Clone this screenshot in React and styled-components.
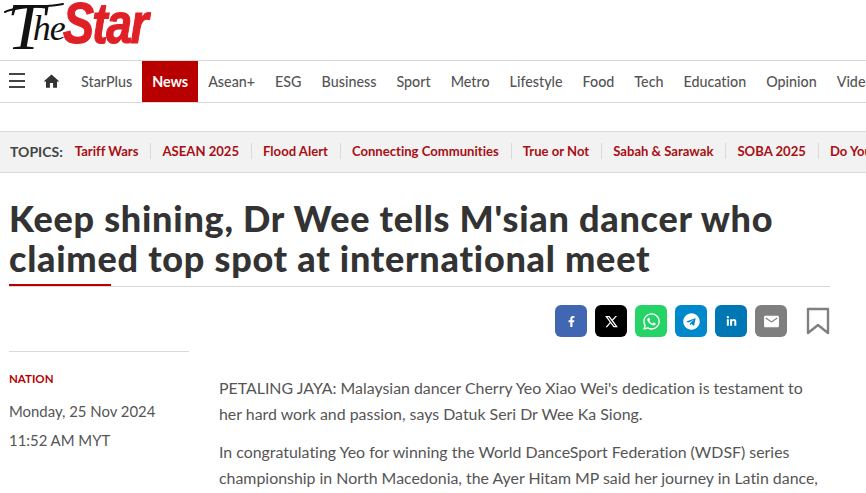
import React from 'react'
import styled, { createGlobalStyle } from 'styled-components'
import { FaFacebookF, FaWhatsapp, FaTelegram, FaLinkedinIn } from 'react-icons/fa'
import { RiTwitterXLine } from 'react-icons/ri'
import { IoMdMail } from 'react-icons/io'
import { MdHome } from 'react-icons/md'

const GlobalStyle = createGlobalStyle`
  html, body {
    margin: 0;
    padding: 0;
    width: 866px;
    height: 493px;
    overflow: hidden;
    background: #fff;
    font-family: Lato, "Liberation Sans", sans-serif;
    font-variant-ligatures: none;
    color: #333;
  }
  * { box-sizing: border-box; }
`
const Page = styled.div`
  width: 866px;
  height: 493px;
  overflow: hidden;
`
const LogoBar = styled.header`
  height: 61px;
  padding-left: 7px;
  display: flex;
  align-items: flex-start;
  border-bottom: 1px solid #d9d9d9;
  position: relative;
`
const LogoThe = styled.span`
  display: flex;
  align-items: flex-start;
  font-family: "Liberation Serif", serif;
  font-style: italic;
  color: #111;
  margin-right: -2px;
`
const LogoCap = styled.span`
  font-size: 68px;
  line-height: 80px;
  margin-top: -14px;
  margin-right: -12px;
`
const LogoRest = styled.span`
  font-size: 36px;
  line-height: 44px;
  margin-top: 6px;
  letter-spacing: -1px;
`
const LogoSwash = styled.svg`
  position: absolute;
  left: 0;
  top: 0;
  width: 70px;
  height: 20px;
`
const LogoStar = styled.span`
  font-family: "Liberation Sans", sans-serif;
  font-style: italic;
  font-weight: 700;
  font-size: 58px;
  line-height: 70px;
  letter-spacing: -2px;
  color: #e02027;
  -webkit-text-stroke: 1.2px #e02027;
  margin-top: -12px;
  display: inline-block;
  transform: scaleX(0.8);
  transform-origin: left center;
`
const Nav = styled.nav`
  height: 42px;
  display: flex;
  align-items: stretch;
  border-bottom: 1px solid #d9d9d9;
  white-space: nowrap;
  overflow: hidden;
`
const Burger = styled.button`
  flex: none;
  width: 16px;
  height: 15px;
  margin: 12px 0 0 9px;
  padding: 0;
  border: 0;
  background: none;
  border-top: 2px solid #444;
  border-bottom: 2px solid #444;
  position: relative;
  &::after {
    content: '';
    position: absolute;
    left: 0;
    right: 0;
    top: 4.5px;
    height: 2px;
    background: #444;
  }
`
const Home = styled.span`
  flex: none;
  display: flex;
  align-items: center;
  margin-left: 17px;
  margin-right: 10px;
  color: #333;
  font-size: 19px;
`
const NavItem = styled.a`
  flex: none;
  display: flex;
  align-items: center;
  padding: 0 10px;
  font-size: 14.3px;
  font-weight: ${p => (p.$active ? 700 : 500)};
  color: ${p => (p.$active ? '#fff' : '#555')};
  background: ${p => (p.$active ? '#b90000' : 'transparent')};
`
const Topics = styled.div`
  margin-top: 28px;
  height: 42px;
  padding: 0 0 2px 10px;
  display: flex;
  align-items: center;
  background: #f2f2f2;
  border-top: 1px solid #d9d9d9;
  border-bottom: 1px solid #d9d9d9;
  white-space: nowrap;
  overflow: hidden;
`
const TopicsLabel = styled.span`
  flex: none;
  font-size: 14px;
  font-weight: 700;
  color: #444;
  margin-right: 12px;
`
const Topic = styled.a`
  flex: none;
  font-size: 13.1px;
  font-weight: 700;
  color: #a80f14;
  padding-right: 12px;
  margin-right: 11px;
  border-right: ${p => (p.$last ? 'none' : '1px solid #d9d9d9')};
`
const Content = styled.main`
  padding: 0 36px 0 9px;
`
const Headline = styled.h1`
  margin: 25px 0 0;
  font-size: 36px;
  line-height: 40px;
  font-weight: 900;
  letter-spacing: 0.75px;
  color: #333;
  white-space: nowrap;
`
const Rule = styled.div`
  margin-top: 8px;
  height: 1px;
  background: #d9d9d9;
  position: relative;
  &::after {
    content: '';
    position: absolute;
    left: 0;
    top: -2px;
    width: 102px;
    height: 2px;
    background: #b90000;
  }
`
const ShareRow = styled.div`
  margin-top: 18px;
  display: flex;
  justify-content: flex-end;
  align-items: center;
  gap: 8px;
`
const ShareButton = styled.a`
  width: 32px;
  height: 32px;
  border-radius: 6px;
  display: flex;
  align-items: center;
  justify-content: center;
  color: #fff;
  font-size: ${p => p.$size || 14}px;
  background: ${p => p.$bg};
`
const Bookmark = styled.svg`
  width: 24px;
  height: 28px;
  margin-left: 11px;
`
const Columns = styled.div`
  margin-top: 14px;
  display: grid;
  grid-template-columns: 180px 1fr;
  column-gap: 30px;
`
const Side = styled.aside`
  border-top: 1px solid #d9d9d9;
  padding-top: 20px;
`
const Section = styled.div`
  font-size: 11.5px;
  line-height: 13px;
  font-weight: 700;
  color: #b90000;
`
const Meta = styled.div`
  font-size: 14.9px;
  line-height: 20px;
  color: #555;
  margin-top: ${p => p.$gap}px;
`
const Article = styled.article`
  padding-top: 24px;
`
const Para = styled.p`
  margin: 0 0 12px;
  font-size: 15.9px;
  line-height: 26px;
  color: #555;
  white-space: nowrap;
`

const topics = ['Tariff Wars', 'ASEAN 2025', 'Flood Alert', 'Connecting Communities', 'True or Not', 'Sabah & Sarawak', 'SOBA 2025', 'Do You Know']
const navItems = ['StarPlus', 'News', 'Asean+', 'ESG', 'Business', 'Sport', 'Metro', 'Lifestyle', 'Food', 'Tech', 'Education', 'Opinion', 'Videos']

export default function App() {
  return (
    <Page>
      <GlobalStyle />
      <LogoBar>
        <LogoThe>
          <LogoCap>T</LogoCap>
          <LogoRest>he</LogoRest>
        </LogoThe>
        <LogoStar>Star</LogoStar>
        <LogoSwash viewBox="0 0 70 20" fill="none">
          <path d="M5 12C20 5 45 8 63 4" stroke="#111" strokeWidth="2" strokeLinecap="round" />
        </LogoSwash>
      </LogoBar>
      <Nav>
        <Burger aria-label="menu" />
        <Home><MdHome /></Home>
        {navItems.map(item => (
          <NavItem key={item} $active={item === 'News'}>{item}</NavItem>
        ))}
      </Nav>
      <Topics>
        <TopicsLabel>TOPICS:</TopicsLabel>
        {topics.map((t, i) => (
          <Topic key={t} $last={i === topics.length - 1}>{t}</Topic>
        ))}
      </Topics>
      <Content>
        <Headline>
          Keep shining, Dr Wee tells M'sian dancer who<br />
          claimed top spot at international meet
        </Headline>
        <Rule />
        <ShareRow>
          <ShareButton $bg="#4267b2" $size={11}><FaFacebookF /></ShareButton>
          <ShareButton $bg="#000" $size={15}><RiTwitterXLine /></ShareButton>
          <ShareButton $bg="#25d366" $size={19}><FaWhatsapp /></ShareButton>
          <ShareButton $bg="#0088cc" $size={17}><FaTelegram /></ShareButton>
          <ShareButton $bg="#0077b5" $size={11}><FaLinkedinIn /></ShareButton>
          <ShareButton $bg="#7f7f7f" $size={17}><IoMdMail /></ShareButton>
          <Bookmark viewBox="0 0 24 28" fill="none">
            <path d="M2 2h20v24l-10-8-10 8z" stroke="#808080" strokeWidth="2.4" strokeLinejoin="round" />
          </Bookmark>
        </ShareRow>
        <Columns>
          <Side>
            <Section>NATION</Section>
            <Meta $gap={16}>Monday, 25 Nov 2024</Meta>
            <Meta $gap={9}>11:52 AM MYT</Meta>
          </Side>
          <Article>
            <Para>
              PETALING JAYA: Malaysian dancer Cherry Yeo Xiao Wei's dedication is testament to<br />
              her hard work and passion, says Datuk Seri Dr Wee Ka Siong.
            </Para>
            <Para>
              In congratulating Yeo for winning the World DanceSport Federation (WDSF) series<br />
              championship in North Macedonia, the Ayer Hitam MP said her journey in Latin dance,
            </Para>
          </Article>
        </Columns>
      </Content>
    </Page>
  )
}
